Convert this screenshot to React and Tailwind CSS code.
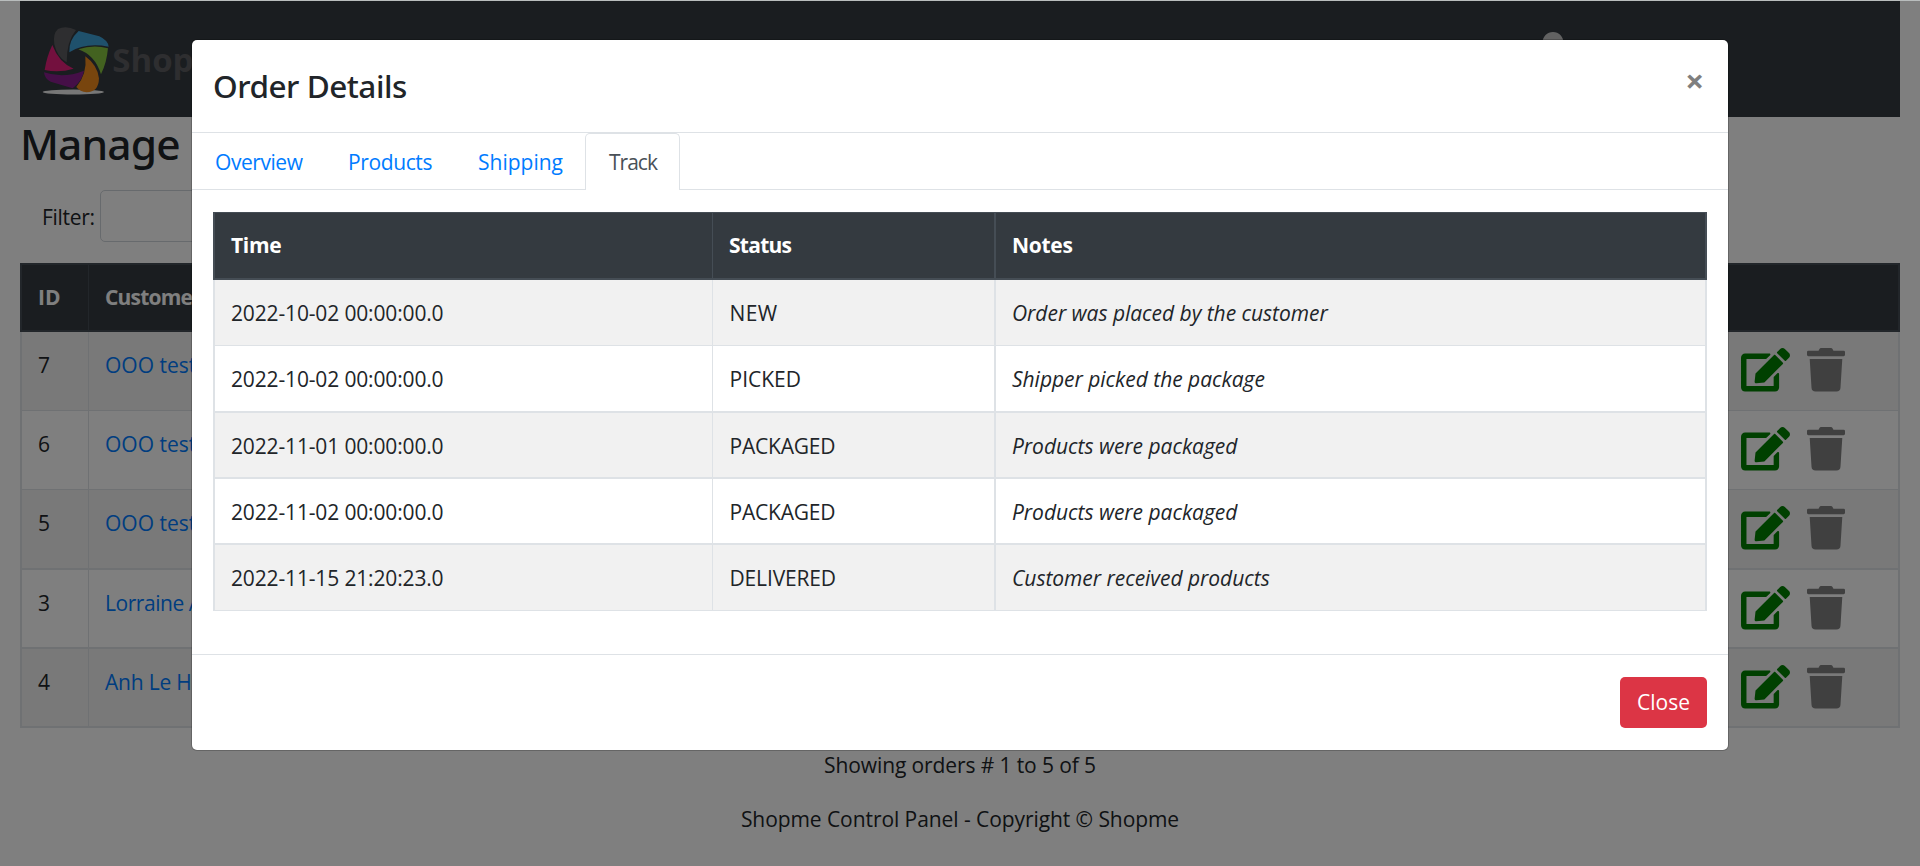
import { FaEdit, FaTrash, FaUser } from 'react-icons/fa';

const ORDERS = [
  { id: 7, name: 'OOO test', row: 'h-[79px] border-b bg-[#f2f2f2]', text: '' },
  { id: 6, name: 'OOO test', row: 'h-[79px] border-b', text: '' },
  { id: 5, name: 'OOO test', row: 'h-[80px] border-b-2 bg-[#f2f2f2]', text: '' },
  { id: 3, name: 'Lorraine A', row: 'h-[79px] border-b-2', text: 'tracking-[-0.45px]' },
  { id: 4, name: 'Anh Le H', row: 'h-[79px] border-b-2 bg-[#f2f2f2]', text: 'tracking-[-0.2px]' },
];

const TRACKS = [
  { time: '2022-10-02 00:00:00.0', status: 'NEW', notes: 'Order was placed by the customer', row: 'h-[66px] border-b bg-[#f1f1f1]', text: 'tracking-[0.4px]' },
  { time: '2022-10-02 00:00:00.0', status: 'PICKED', notes: 'Shipper picked the package', row: 'h-[67px] border-b-2', text: '' },
  { time: '2022-11-01 00:00:00.0', status: 'PACKAGED', notes: 'Products were packaged', row: 'h-[66px] border-b-2 bg-[#f1f1f1]', text: 'tracking-[-0.2px]' },
  { time: '2022-11-02 00:00:00.0', status: 'PACKAGED', notes: 'Products were packaged', row: 'h-[66px] border-b-2', text: 'tracking-[-0.2px]' },
  { time: '2022-11-15 21:20:23.0', status: 'DELIVERED', notes: 'Customer received products', row: 'h-[66px] border-b bg-[#f1f1f1]', text: 'tracking-[-0.15px]' },
];

function Logo() {
  return (
    <svg viewBox="30 30 220 215" className="h-[71.7px] w-[73.3px] shrink-0">
      <ellipse cx="130" cy="231" rx="92" ry="7.5" fill="#eeeeee" />
      <path d="M84 42Q108 30 138 45Q110 78 110 142Q82 128 73 88Q68 56 84 42Z" fill="#5c5d60" />
      <path d="M146 48L208 64Q234 76 236 95Q165 82 118 112Q116 75 146 48Z" fill="#3fa2d9" />
      <path d="M145 103Q190 88 234 100Q230 145 213 178Q195 120 145 103Z" fill="#86c440" />
      <path d="M166 124Q202 150 207 190Q206 232 170 232Q150 230 139 216Q172 178 166 124Z" fill="#f08a1c" />
      <path d="M42 172Q100 192 162 167Q158 196 128 220L62 200Q44 192 42 172Z" fill="#8a1f8f" />
      <path d="M67 90Q86 142 131 161Q88 174 44 165Q50 125 67 90Z" fill="#e6207c" />
    </svg>
  );
}

function OrdersPage() {
  return (
    <div className="flex h-full flex-col px-5 pt-px">
      <nav className="flex h-[116px] shrink-0 bg-[#343a40] pl-5">
        <div className="flex w-[1492px] items-start pt-6">
          <Logo />
          <span className="-ml-px pt-[19px] text-[33px] leading-8 font-bold text-[#5c5d60]">Shopme</span>
        </div>
        <FaUser className="mt-[31px] h-[42px] w-[42px] text-[#c4c4c4]" />
      </nav>
      <h2 className="h-[73px] shrink-0 pt-px font-['Noto_Sans',sans-serif] text-[42.5px] leading-[52px] font-medium tracking-[-0.9px]">
        Manage
      </h2>
      <div className="flex h-[52px] shrink-0 pl-[22px]">
        <span className="w-[58px] pt-[11px] tracking-[-0.3px]">Filter:</span>
        <div className="w-[300px] rounded-[5px] border border-[#ced4da] bg-white" />
      </div>
      <div className="mt-[21px] flex shrink-0 flex-col">
        <div className="flex h-[69px] border-2 border-[#454d55] bg-[#343a40] font-bold text-white">
          <div className="w-[67px] border-r border-[#454d55] pt-4 pl-4">ID</div>
          <div className="pt-4 pl-4 tracking-[-0.8px]">Customer</div>
        </div>
        {ORDERS.map((o) => (
          <div key={o.id} className={`flex border-[#dee2e6] border-l-2 border-r-2 ${o.row}`}>
            <div className="w-[67px] border-r border-[#dee2e6] pt-[17px] pl-4">{o.id}</div>
            <div className={`w-[1652px] pt-[17px] pl-4 text-[#007bff] ${o.text}`}>{o.name}</div>
            <div className="flex gap-[17px] pt-4">
              <FaEdit className="h-[43.5px] w-[49px] text-[#008000]" />
              <FaTrash className="h-[43.5px] w-[38px] text-[#808080]" />
            </div>
          </div>
        ))}
      </div>
      <div className="flex flex-col items-center pt-[21px]">
        <p className="tracking-[-0.11px]">Showing orders # 1 to 5 of 5</p>
        <p className="mt-[22px] tracking-[-0.07px]">Shopme Control Panel - Copyright © Shopme</p>
      </div>
    </div>
  );
}

function OrderModal() {
  return (
    <div className="absolute top-10 left-48 flex h-[710px] w-[1536px] flex-col rounded-[5px] bg-white ring-1 ring-black/20">
      <div className="flex h-[93px] justify-between border-b border-[#dee2e6] pr-6 pl-[21px]">
        <h5 className="pt-[26px] font-['Noto_Sans',sans-serif] text-[31.5px] leading-10 font-medium tracking-[-0.48px]">Order Details</h5>
        <button className="self-start pt-[25px] font-['Open_Sans',sans-serif] text-[33px] leading-8 font-bold text-[#7f7f7f]">×</button>
      </div>
      <div className="flex h-[57px] text-[#007bff]">
        <div className="w-[134px] border-b border-[#dee2e6] pt-[13px] pl-[23px] tracking-[-0.44px]">Overview</div>
        <div className="w-[129px] border-b border-[#dee2e6] pt-[13px] pl-[22px] tracking-[-0.39px]">Products</div>
        <div className="w-[130px] border-b border-[#dee2e6] pt-[13px] pl-[23px]">Shipping</div>
        <div className="w-[95px] rounded-t-[5px] border border-b-0 border-[#dee2e6] pt-3 pl-[23px] tracking-[-1px] text-[#495057]">Track</div>
        <div className="flex-1 border-b border-[#dee2e6]" />
      </div>
      <div className="flex h-[465px] flex-col border-b border-[#dee2e6] px-[21px] pt-[22px]">
        <div className="flex h-[68px] border-2 border-t border-[#454d55] bg-[#343a40] font-bold text-white">
          <div className="w-[498px] border-r border-[#454d55] pt-4 pl-4 tracking-[-0.3px]">Time</div>
          <div className="w-[283px] border-r-2 border-[#454d55] pt-4 pl-4 tracking-[-0.74px]">Status</div>
          <div className="pt-4 pl-4 tracking-[-0.3px]">Notes</div>
        </div>
        {TRACKS.map((t, i) => (
          <div key={i} className={`flex border-r-2 border-l-2 border-[#dee2e6] ${t.row}`}>
            <div className="w-[498px] border-r border-[#dee2e6] pt-[17px] pl-4 tracking-[-0.15px]">{t.time}</div>
            <div className={`w-[283px] border-r-2 border-[#dee2e6] pt-[17px] pl-[16.5px] ${t.text}`}>{t.status}</div>
            <div className="pt-[17px] pl-4 tracking-[-0.03px] italic">{t.notes}</div>
          </div>
        ))}
      </div>
      <div className="flex justify-end pt-[22px] pr-[21px]">
        <button className="h-[51px] w-[87px] rounded-[5px] bg-[#dc3545] pb-px text-white">Close</button>
      </div>
    </div>
  );
}

export default function App() {
  return (
    <div className="relative h-[866px] w-[1920px] overflow-hidden bg-white font-['Open_Sans',sans-serif] text-[21px] leading-8 text-[#212529]">
      <OrdersPage />
      <div className="absolute inset-0 border-t border-[#b9bdbd] bg-black/50" />
      <OrderModal />
    </div>
  );
}
